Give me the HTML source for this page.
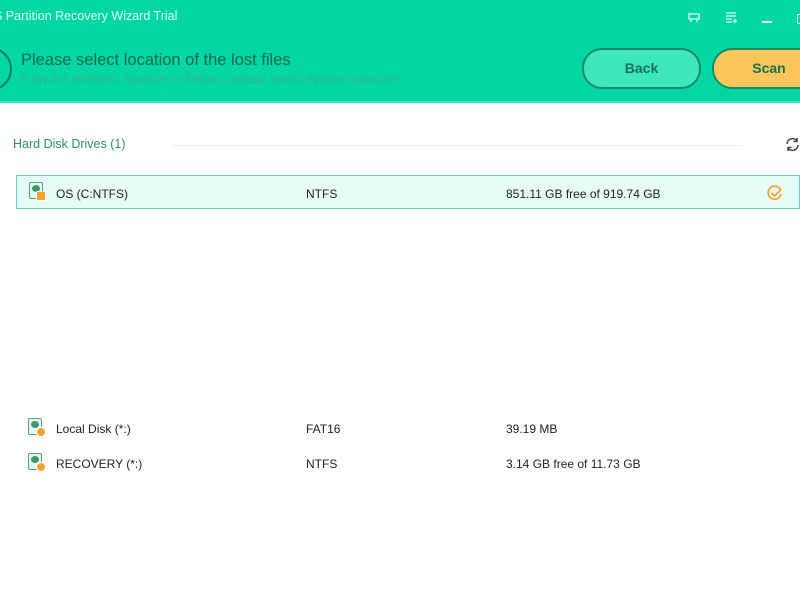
<!DOCTYPE html>
<html><head><style>
body{margin:0;width:800px;height:600px;overflow:hidden;background:#fff;font-family:"Liberation Sans",sans-serif;position:relative}
.hdr{position:absolute;left:0;top:0;width:800px;height:101px;background:#03d6a3;border-bottom:2px solid #3ee6c0}
.t{position:absolute;color:#d8fff3;font-size:12.5px;top:9px;left:-6px}
.circ{position:absolute;left:-32px;top:47px;width:40px;height:40px;border:2px solid #0c7d5f;border-radius:50%}
.h1{position:absolute;left:21px;top:51px;font-size:16.5px;color:#0d6b52}
.h2{position:absolute;left:21px;top:71px;font-size:13px;color:#2fb88f}
.btn{position:absolute;top:48px;height:37px;border:2px solid #1a8a66;border-radius:20px;font-weight:bold;font-size:14px;text-align:center;line-height:37px}
.row{position:absolute;font-size:12px;color:#222}
.di{position:absolute;width:12px;height:15px;border:1.5px solid #4caa7a;border-radius:2px;background:#e6f5ee}
.di:after{content:"";position:absolute;left:2px;top:2px;width:8px;height:7px;border-radius:50%;background:#3a9a6b}
.dot{position:absolute;width:8px;height:8px;border-radius:50%;background:#f3a22b;border:1px solid #fff}
</style></head><body>
<div class="hdr">
<div class="t">S Partition Recovery Wizard Trial</div>
<div class="circ"></div>
<div class="h1">Please select location of the lost files</div>
<div class="h2">If on the desktop, favorite or library, please select system partition</div>
<div class="btn" style="left:582px;width:115px;background:#3de6bd;color:#137257">Back</div>
<div class="btn" style="left:712px;width:110px;background:#fcc65a;color:#1a6e52">Scan</div>
<svg style="position:absolute;left:688px;top:12px" width="12" height="12" viewBox="0 0 12 12" fill="none" stroke="#d8fff3" stroke-width="1.3"><path d="M1 2h10v5H1zM3 7v3M9 7v3M1 2V1"/></svg>
<svg style="position:absolute;left:726px;top:12px" width="11" height="11" viewBox="0 0 11 11" fill="none" stroke="#d8fff3" stroke-width="1.3"><path d="M0 1h10M0 4h10M0 7h6M0 10h6M9 7v4M7 9h4"/></svg>
<div style="position:absolute;left:762px;top:21px;width:10px;height:2px;background:#e6fff8"></div>
<div style="position:absolute;left:797px;top:14px;width:8px;height:8px;border:1px solid #e6fff8"></div>
</div>
<div class="row" style="left:13px;top:137px;color:#2c8e6e;font-size:12.5px">Hard Disk Drives (1)</div>
<div style="position:absolute;left:172px;top:145px;width:570px;height:1px;background:#eee"></div>
<svg style="position:absolute;left:785px;top:137px" width="15" height="15" viewBox="0 0 15 15" fill="none" stroke="#444" stroke-width="1.5"><path d="M2 7a5.5 5.5 0 0 1 10-3M13 8a5.5 5.5 0 0 1-10 3M12 1v3.5H8.5M3 14v-3.5h3.5"/></svg>
<div style="position:absolute;left:16px;top:175px;width:784px;height:34px;background:#e6fcf6;border:1px solid #6ad8b8;box-sizing:border-box"></div>
<div class="di" style="left:29px;top:182px"></div><div class="dot" style="left:36px;top:191px;border-radius:1px"></div>
<div class="row" style="left:56px;top:187px">OS (C:NTFS)</div>
<div class="row" style="left:306px;top:187px">NTFS</div>
<div class="row" style="left:506px;top:187px">851.11 GB free of 919.74 GB</div>
<svg style="position:absolute;left:767px;top:185px" width="17" height="16" viewBox="0 0 17 16" fill="none" stroke="#f0a834" stroke-width="1.8"><path d="M13 4A6.5 6.5 0 1 0 14 9"/><path d="M4.5 8l3 3 7-7"/></svg>
<div class="di" style="left:28px;top:418px"></div><div class="dot" style="left:36px;top:427px"></div>
<div class="row" style="left:56px;top:422px">Local Disk (*:)</div>
<div class="row" style="left:306px;top:422px">FAT16</div>
<div class="row" style="left:506px;top:422px">39.19 MB</div>
<div class="di" style="left:28px;top:453px"></div><div class="dot" style="left:36px;top:462px"></div>
<div class="row" style="left:56px;top:457px">RECOVERY (*:)</div>
<div class="row" style="left:306px;top:457px">NTFS</div>
<div class="row" style="left:506px;top:457px">3.14 GB free of 11.73 GB</div>
</body></html>
